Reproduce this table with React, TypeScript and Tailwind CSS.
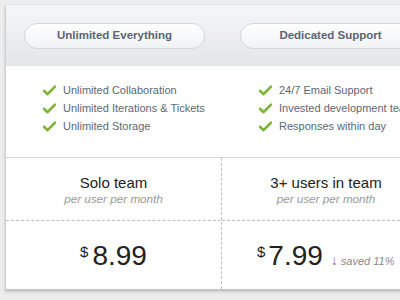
import React from 'react';

const features = [
  { title: 'Unlimited Everything', items: ['Unlimited Collaboration', 'Unlimited Iterations & Tickets', 'Unlimited Storage'] },
  { title: 'Dedicated Support', items: ['24/7 Email Support', 'Invested development team', 'Responses within day'] },
];

function Check() {
  return (
    <svg width="13" height="11" viewBox="0 0 13 11" className="shrink-0">
      <path d="M1 5.8 L4.6 9.2 L12 1.6" fill="none" stroke="#7ab533" strokeWidth="2.6" strokeLinecap="round" strokeLinejoin="round" />
    </svg>
  );
}

export default function App() {
  return (
    <main className="w-[400px] h-[300px] overflow-hidden bg-[#ededed]" style={{ fontFamily: '"Liberation Sans", Arial, sans-serif' }}>
      <div className="ml-[5px] mt-[5px] w-[460px] bg-white border-l border-[#cfcfcf] border-b-2 border-b-[#c4c4c4] shadow-[0_1px_3px_rgba(0,0,0,0.15)]">
        {/* header pills */}
        <div className="flex h-[61px] bg-gradient-to-b from-[#f5f6f7] to-[#e3e7ea] border-b border-[#e0e3e6]">
          {features.map((f) => (
            <div key={f.title} className="w-[216px] shrink-0 pt-[18px] px-[18px]">
              <div className="h-[26px] w-[181px] rounded-full border border-[#d3d7db] bg-gradient-to-b from-white to-[#f0f2f4] flex items-center justify-center text-[11.5px] font-bold text-[#5a6573]">
                {f.title}
              </div>
            </div>
          ))}
        </div>

        {/* feature lists */}
        <div className="flex h-[92px] border-b border-[#d6d6d6]">
          {features.map((f) => (
            <ul key={f.title} className="w-[216px] shrink-0 pt-[15px] pl-[37px] flex flex-col">
              {f.items.map((it) => (
                <li key={it} className="h-[18px] flex items-center gap-[7px] text-[11px] text-[#5b6775] whitespace-nowrap">
                  <Check />
                  {it}
                </li>
              ))}
            </ul>
          ))}
        </div>

        {/* plans */}
        <div className="flex">
          <div className="w-[216px] shrink-0 border-r border-dashed border-[#bdbdbd]">
            <div className="h-[63px] flex flex-col items-center pt-[16px] border-b border-dashed border-[#bdbdbd]">
              <div className="text-[15px] leading-[18px] text-[#222]">Solo team</div>
              <div className="text-[11.7px] leading-[14px] italic text-[#999]">per user per month</div>
            </div>
            <div className="h-[68px] pt-[21px] text-center leading-[28px] text-[#222]">
              <span className="text-[15px] leading-[20px] align-top mr-[4px]">$</span>
              <span className="text-[28px]">8.99</span>
            </div>
          </div>
          <div className="w-[208px] shrink-0">
            <div className="h-[63px] flex flex-col items-center pt-[16px] border-b border-dashed border-[#bdbdbd]">
              <div className="text-[15px] leading-[18px] text-[#222]">3+ users in team</div>
              <div className="text-[11.7px] leading-[14px] italic text-[#999]">per user per month</div>
            </div>
            <div className="h-[68px] pt-[21px] pl-[35px] leading-[28px] text-[#222] whitespace-nowrap">
              <span className="text-[15px] leading-[20px] align-top mr-[3px]">$</span>
              <span className="text-[28px]">7.99</span>
              <span className="ml-[8px] text-[14px] text-[#777]">↓</span>
              <span className="ml-[3px] text-[11px] italic text-[#888]">saved 11%</span>
            </div>
          </div>
        </div>
      </div>
    </main>
  );
}
